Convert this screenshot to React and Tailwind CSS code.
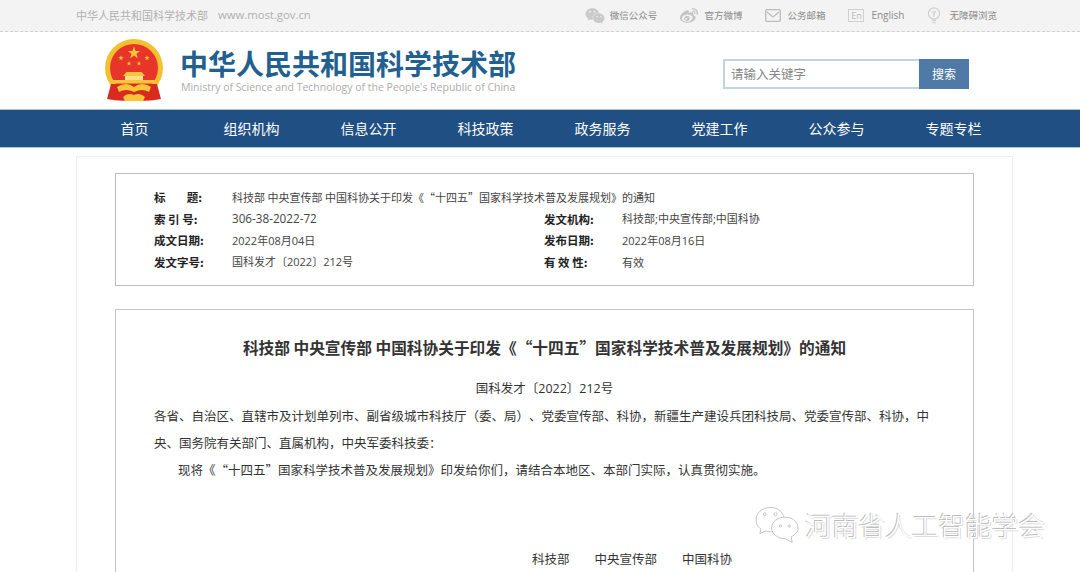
import React from "react";
import { FaWeixin, FaWeibo } from "react-icons/fa";

const FONT = "font-['Noto_Sans_CJK_SC','Open_Sans',sans-serif]";
const LATIN = "font-['Open_Sans','Noto_Sans_CJK_SC',sans-serif]";

const Star = ({ x, y, r, rot = 0 }) => {
  const pts = [];
  for (let i = 0; i < 10; i++) {
    const rad = i % 2 ? r * 0.4 : r;
    const a = (-90 + rot + i * 36) * (Math.PI / 180);
    pts.push(`${(x + rad * Math.cos(a)).toFixed(2)},${(y + rad * Math.sin(a)).toFixed(2)}`);
  }
  return <polygon points={pts.join(" ")} fill="#f6c63a" />;
};

const Emblem = () => (
  <svg width="60" height="64" viewBox="0 0 60 64" className="shrink-0">
    <circle cx="30" cy="29" r="29" fill="#f3c02f" />
    <circle cx="30" cy="29" r="24" fill="#e8352a" />
    <Star x={30} y={14} r={6.5} />
    <Star x={17} y={19} r={2.8} />
    <Star x={43} y={19} r={2.8} />
    <Star x={25} y={24.5} r={2.5} />
    <Star x={35} y={24.5} r={2.5} />
    <path d="M19 37 L41 37 L37.5 33 L22.5 33 Z" fill="#f6c63a" />
    <rect x="21" y="37" width="18" height="4" fill="#fadf85" />
    <rect x="9" y="41" width="42" height="3.5" fill="#f6c63a" />
    <path d="M7 45 H53 L57 60 Q44 63 30 61 Q16 63 3 60 Z" fill="#d92a1f" />
    <path d="M13 48 Q22 42 30 48 Q38 42 47 48 L45 53 Q38 49 30 53 Q22 49 15 53 Z" fill="#f6c63a" />
    <path d="M19 58 Q24 53 30 56 Q36 53 41 58 L39 62 H21 Z" fill="#f6c63a" />
  </svg>
);

const Mail = () => (
  <svg width="16" height="14" viewBox="0 0 16 14" fill="none" stroke="#bcbcbc" strokeWidth="1.3">
    <rect x="0.7" y="0.7" width="14.6" height="11.6" rx="1" />
    <path d="M2 3 L8 8 L14 3" />
  </svg>
);

const Bulb = () => (
  <svg width="14" height="17" viewBox="0 0 14 17" fill="none" stroke="#cfcfcf" strokeWidth="1.2">
    <circle cx="7" cy="6.5" r="5.6" />
    <path d="M4.8 5 H9.2 M7 5 V10" />
    <path d="M5 13 H9 M5.5 15.5 H8.5" strokeWidth="1.5" />
  </svg>
);

const TopLink = ({ icon, children, gap }) => (
  <div className={`flex items-center ${gap}`}>
    {icon}
    <span>{children}</span>
  </div>
);

const NAV = ["首页", "组织机构", "信息公开", "科技政策", "政务服务", "党建工作", "公众参与", "专题专栏"];

const Row = ({ label, value, latin }) => (
  <div className="flex h-[21.7px] items-center">
    <span className="w-[78px] shrink-0 text-[11.5px] font-bold text-[#222]">{label}</span>
    <span className={`text-[11px] text-[#444] ${latin ? LATIN : ""}`}>{value}</span>
  </div>
);

const Watermark = () => (
  <div className="absolute left-[755px] top-[506px] flex items-center gap-[5px]">
    <svg width="45" height="38" viewBox="0 0 46 38" fill="#fff" stroke="#c4c4c4" strokeWidth="1">
      <path d="M16 1 C7 1 1 7 1 14 C1 18 3 21 6 23 L5 28 L11 25 C13 26 15 26 17 26 C25 26 30 20 30 14 C30 7 24 1 16 1 Z" />
      <path d="M31 11 C23 11 17 16 17 22 C17 28 23 33 31 33 L38 37 L37 31 C41 29 44 26 44 22 C44 16 38 11 31 11 Z" />
      <circle cx="10" cy="8" r="1.4" fill="none" />
      <circle cx="21" cy="8" r="1.4" fill="none" />
      <circle cx="26" cy="20" r="1.2" fill="none" />
      <circle cx="35" cy="20" r="1.2" fill="none" />
    </svg>
    <span className="whitespace-nowrap text-[26.7px] font-light leading-none text-white [text-shadow:-1px_-1px_0_#bdbdbd,1px_1px_0_#dddddd]">
      河南省人工智能学会
    </span>
  </div>
);

export default function App() {
  return (
    <div lang="zh-CN" className={`relative h-[572px] w-[1080px] overflow-hidden bg-white [text-spacing-trim:space-all] ${FONT}`}>
      <div className="h-[32px] border-b border-dashed border-[#cfcfcf] bg-[#f3f3f3]">
        <div className="ml-[76px] flex h-[31px] w-[921px] items-center justify-between">
          <div className="flex items-center gap-[10px] text-[#b0b0b0]">
            <span className="text-[11px]">中华人民共和国科学技术部</span>
            <span className={`text-[11.3px] ${LATIN}`}>www.most.gov.cn</span>
          </div>
          <div className="flex items-center gap-[23px] text-[9.5px] text-[#8a8a8a]">
            <TopLink icon={<FaWeixin className="text-[20px] text-[#cacaca]" />} gap="gap-[5px]">微信公众号</TopLink>
            <TopLink icon={<FaWeibo className="text-[18px] text-[#c4c4c4]" />} gap="gap-[6px]">官方微博</TopLink>
            <TopLink icon={<Mail />} gap="gap-[6px]">公务邮箱</TopLink>
            <TopLink
              icon={
                <span className={`flex h-[13px] w-[16px] items-center justify-center border border-[#cfcfcf] text-[9px] leading-none text-[#bbb] ${LATIN}`}>
                  En
                </span>
              }
              gap="gap-[7px]"
            >
              <span className={`text-[10px] ${LATIN}`}>English</span>
            </TopLink>
            <TopLink icon={<Bulb />} gap="gap-[8px]">无障碍浏览</TopLink>
          </div>
        </div>
      </div>

      <div className="flex h-[77px] items-center pl-[104px]">
        <Emblem />
        <div className="ml-[16px] flex w-[335px] flex-col">
          <span className="whitespace-nowrap text-[28px] font-bold leading-[33px] text-[#22608f]">
            中华人民共和国科学技术部
          </span>
          <span className={`mt-[1px] whitespace-nowrap pl-[1px] text-[10.5px] leading-[13px] text-[#adadad] ${LATIN}`}>
            Ministry of Science and Technology of the People's Republic of China
          </span>
        </div>
        <div className="ml-[208px] mt-[7px] flex h-[30px] w-[246px]">
          <div className="flex h-full w-[196px] items-center border-2 border-r-0 border-[#c3d3e6] pl-[6px] text-[12.5px] text-[#888]">
            请输入关键字
          </div>
          <div className="flex h-full w-[50px] items-center justify-center bg-[#4f79a6] text-[12px] text-white">
            搜索
          </div>
        </div>
      </div>

      <div className="h-[39px] border-y border-[#a9c2dc] bg-[#1f4f83]">
        <div className="ml-[76px] grid h-full w-[936px] grid-cols-8">
          {NAV.map((n) => (
            <div key={n} className="flex items-center justify-center text-[14px] text-white">
              {n}
            </div>
          ))}
        </div>
      </div>

      <div className="ml-[76px] mt-[8px] w-[937px] border border-[#eeeeee] px-[38px] pt-[16px]">
        <div className="h-[113px] border border-[#bdbdbd] pl-[38px] pt-[12.6px]">
          <Row label={<span className="flex w-[48px] justify-between"><span>标</span><span>题:</span></span>} value="科技部 中央宣传部 中国科协关于印发《“十四五”国家科学技术普及发展规划》的通知" />
          <div className="grid grid-cols-[390px_1fr]">
            <Row label="索 引 号:" value={<span className="text-[11.7px]">306-38-2022-72</span>} latin />
            <Row label="发文机构:" value="科技部;中央宣传部;中国科协" latin />
            <Row label="成文日期:" value="2022年08月04日" latin />
            <Row label="发布日期:" value="2022年08月16日" latin />
            <Row label="发文字号:" value="国科发才〔2022〕212号" latin />
            <Row label="有 效 性:" value="有效" />
          </div>
        </div>

        <div className="mt-[23px] h-[300px] border border-[#c4c4c4] px-[38px] pt-[25px] text-[12.5px] text-[#333]">
          <h1 className="text-center text-[15.7px] font-bold leading-[26px] text-[#333]">
            科技部 中央宣传部 中国科协关于印发《“十四五”国家科学技术普及发展规划》的通知
          </h1>
          <p className={`mt-[15px] text-center leading-[26px] ${LATIN}`}>国科发才〔2022〕212号</p>
          <p className="leading-[27px]">
            各省、自治区、直辖市及计划单列市、副省级城市科技厅（委、局）、党委宣传部、科协，新疆生产建设兵团科技局、党委宣传部、科协，中央、国务院有关部门、直属机构，中央军委科技委：
          </p>
          <p className="indent-[24px] leading-[27px]">
            现将《“十四五”国家科学技术普及发展规划》印发给你们，请结合本地区、本部门实际，认真贯彻实施。
          </p>
          <div className="mt-[62px] flex gap-[25px] pl-[378px] leading-[27px]">
            <span>科技部</span>
            <span>中央宣传部</span>
            <span>中国科协</span>
          </div>
        </div>
      </div>

      <Watermark />
    </div>
  );
}
